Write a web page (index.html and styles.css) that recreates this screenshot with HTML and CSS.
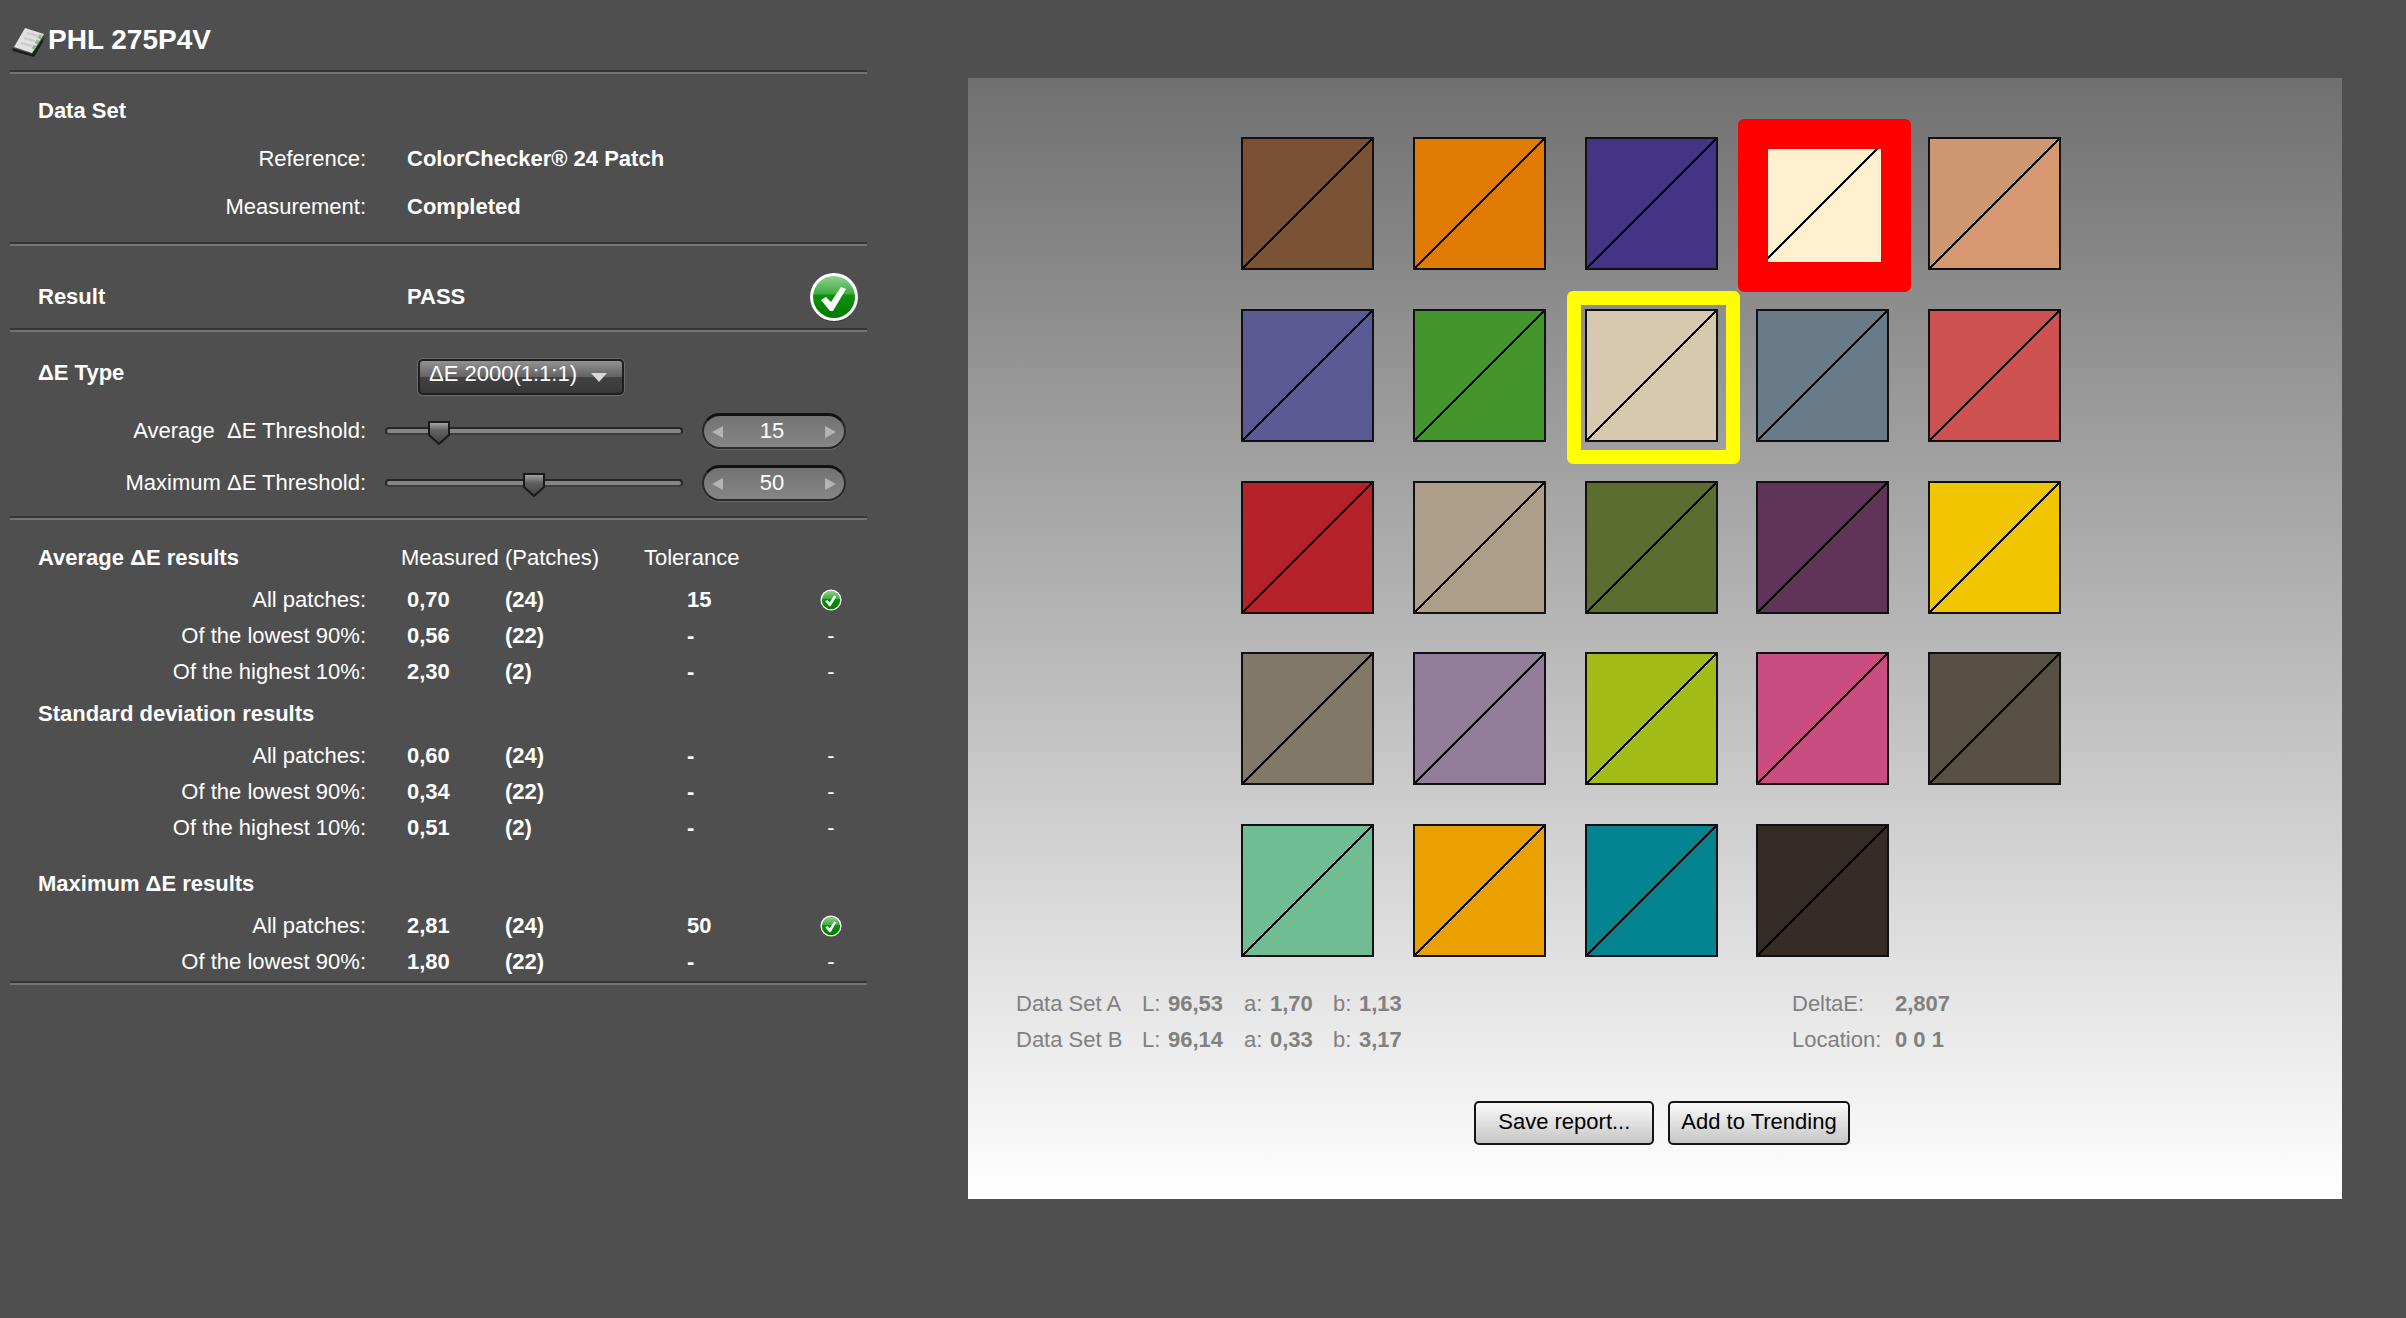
FILE: index.html
```
<!DOCTYPE html>
<html lang="en">
<head>
    <meta charset="UTF-8">
    <meta name="viewport" content="width=device-width, initial-scale=1.0">
    <title>PHL 275P4V</title>
    <link rel="stylesheet" href="styles.css">
</head>
<body>
    <!-- shared pass icon -->
    <svg class="defs" width="0" height="0" aria-hidden="true">
        <defs>
            <linearGradient id="green" x1="0" y1="0" x2="0" y2="1">
                <stop offset="0" stop-color="#8fcf8f"/>
                <stop offset="0.42" stop-color="#3fae3f"/>
                <stop offset="0.46" stop-color="#0c920c"/>
                <stop offset="1" stop-color="#007a00"/>
            </linearGradient>
            <symbol id="pass" viewBox="0 0 50 50">
                <circle cx="25" cy="26" r="24" fill="#000" opacity="0.25"/>
                <circle cx="25" cy="25" r="24" fill="#fff"/>
                <circle cx="25" cy="25" r="21" fill="url(#green)"/>
                <path d="M12 28l5-3 5 5 10-15 5 2-13 22h-3z" fill="#fff"/>
            </symbol>
        </defs>
    </svg>

    <main class="layout">
        <div class="report">
            <header class="title">
                <svg class="title-icon" viewBox="0 0 34 34" aria-hidden="true">
                    <path d="M0 23L20 29 32 12 31 17 22 32 1 26z" fill="#1c1c1c"/>
                    <path d="M13 3L32 9 20 28 2 22z" fill="#e0e0e0"/>
                    <path d="M15 8l11 3M12 13l11 3M9 18l11 3" stroke="#cacaca" stroke-width="2"/>
                    <path d="M29 10l-8 14" stroke="#86bd86" stroke-width="3" stroke-dasharray="4 2"/>
                </svg>
                <h1>PHL 275P4V</h1>
            </header>
            <hr>

            <section class="dataset">
                <h2>Data Set</h2>
                <dl>
                    <dt>Reference:</dt>
                    <dd>ColorChecker® 24 Patch</dd>
                    <dt>Measurement:</dt>
                    <dd>Completed</dd>
                </dl>
            </section>
            <hr>

            <section class="result">
                <h2>Result</h2>
                <strong>PASS</strong>
                <svg class="pass-large" role="img" aria-label="Pass"><use href="#pass"/></svg>
            </section>
            <hr>

            <section class="thresholds">
                <div class="type-row">
                    <label for="type">ΔE Type</label>
                    <div class="select-box">
                        <select id="type">
                            <option>ΔE 2000(1:1:1)</option>
                            <option>ΔE 1994</option>
                            <option>ΔE 1976</option>
                        </select>
                        <svg class="select-arrow" viewBox="0 0 16 9" aria-hidden="true"><path d="M0 0h16L8 9z" fill="#d8d8d8"/></svg>
                    </div>
                </div>
                <div class="slider-row">
                    <label for="avg">Average&nbsp; ΔE Threshold:</label>
                    <input class="slider" id="avg" type="range" min="0" max="100" value="15">
                    <div class="spinner">
                        <button type="button" aria-label="Decrease average threshold"><svg viewBox="0 0 11 12"><path d="M11 0v12L0 6z"/></svg></button>
                        <input type="text" value="15" aria-label="Average ΔE threshold value">
                        <button type="button" aria-label="Increase average threshold"><svg viewBox="0 0 11 12"><path d="M0 0v12l11-6z"/></svg></button>
                    </div>
                </div>
                <div class="slider-row">
                    <label for="max">Maximum ΔE Threshold:</label>
                    <input class="slider" id="max" type="range" min="0" max="100" value="50">
                    <div class="spinner">
                        <button type="button" aria-label="Decrease maximum threshold"><svg viewBox="0 0 11 12"><path d="M11 0v12L0 6z"/></svg></button>
                        <input type="text" value="50" aria-label="Maximum ΔE threshold value">
                        <button type="button" aria-label="Increase maximum threshold"><svg viewBox="0 0 11 12"><path d="M0 0v12l11-6z"/></svg></button>
                    </div>
                </div>
            </section>
            <hr>

            <table class="results">
                <colgroup>
                    <col class="col-label"><col class="col-value"><col class="col-count"><col class="col-tolerance"><col>
                </colgroup>
                <tbody>
                    <tr class="group">
                        <th>Average ΔE results</th>
                        <th class="plain" colspan="2">Measured (Patches)</th>
                        <th class="plain">Tolerance</th>
                        <td></td>
                    </tr>
                    <tr><th>All patches:</th><td>0,70</td><td>(24)</td><td>15</td><td><svg class="pass-small" role="img" aria-label="Pass"><use href="#pass"/></svg></td></tr>
                    <tr><th>Of the lowest 90%:</th><td>0,56</td><td>(22)</td><td>-</td><td>-</td></tr>
                    <tr><th>Of the highest 10%:</th><td>2,30</td><td>(2)</td><td>-</td><td>-</td></tr>
                </tbody>
                <tbody class="deviation">
                    <tr class="group"><th colspan="5">Standard deviation results</th></tr>
                    <tr><th>All patches:</th><td>0,60</td><td>(24)</td><td>-</td><td>-</td></tr>
                    <tr><th>Of the lowest 90%:</th><td>0,34</td><td>(22)</td><td>-</td><td>-</td></tr>
                    <tr><th>Of the highest 10%:</th><td>0,51</td><td>(2)</td><td>-</td><td>-</td></tr>
                </tbody>
                <tbody class="maximum">
                    <tr class="group"><th colspan="5">Maximum ΔE results</th></tr>
                    <tr><th>All patches:</th><td>2,81</td><td>(24)</td><td>50</td><td><svg class="pass-small" role="img" aria-label="Pass"><use href="#pass"/></svg></td></tr>
                    <tr><th>Of the lowest 90%:</th><td>1,80</td><td>(22)</td><td>-</td><td>-</td></tr>
                </tbody>
            </table>
            <hr>
        </div>

        <div class="viewer">
            <div class="patches">
                <div class="patch" style="--a:#7a5035;--b:#7a5334"></div>
                <div class="patch" style="--a:#e07c04;--b:#e07c04"></div>
                <div class="patch" style="--a:#433484;--b:#433484"></div>
                <div class="patch worst" style="--a:#fff0d0;--b:#fff0d0"></div>
                <div class="patch" style="--a:#cd9870;--b:#d69870"></div>

                <div class="patch" style="--a:#5b5b94;--b:#5a5993"></div>
                <div class="patch" style="--a:#45952d;--b:#45952d"></div>
                <div class="patch selected" style="--a:#d7c9af;--b:#d7c9af"></div>
                <div class="patch" style="--a:#697a88;--b:#697a88"></div>
                <div class="patch" style="--a:#ce5152;--b:#ce5152"></div>

                <div class="patch" style="--a:#b7212a;--b:#b7212a"></div>
                <div class="patch" style="--a:#ad9f8a;--b:#ad9f8a"></div>
                <div class="patch" style="--a:#5d6d30;--b:#5d6d30"></div>
                <div class="patch" style="--a:#603359;--b:#603359"></div>
                <div class="patch" style="--a:#f1c500;--b:#f1c500"></div>

                <div class="patch" style="--a:#82786a;--b:#82786a"></div>
                <div class="patch" style="--a:#927d9a;--b:#927d9a"></div>
                <div class="patch" style="--a:#a2bb17;--b:#a2bb17"></div>
                <div class="patch" style="--a:#ca4d80;--b:#ca4d80"></div>
                <div class="patch" style="--a:#565143;--b:#565143"></div>

                <div class="patch" style="--a:#70bd95;--b:#70bd95"></div>
                <div class="patch" style="--a:#eaa000;--b:#eaa000"></div>
                <div class="patch" style="--a:#048391;--b:#048391"></div>
                <div class="patch" style="--a:#332c25;--b:#352c25"></div>
            </div>

            <table class="info">
                <colgroup>
                    <col class="w-name"><col class="w-key"><col class="w-l"><col class="w-key"><col class="w-a"><col class="w-key"><col><col class="w-delta"><col class="w-last">
                </colgroup>
                <tr><th>Data Set A</th><th>L:</th><td>96,53</td><th>a:</th><td>1,70</td><th>b:</th><td>1,13</td><th>DeltaE:</th><td>2,807</td></tr>
                <tr><th>Data Set B</th><th>L:</th><td>96,14</td><th>a:</th><td>0,33</td><th>b:</th><td>3,17</td><th>Location:</th><td>0 0 1</td></tr>
            </table>

            <div class="actions">
                <button type="button">Save report...</button>
                <button type="button">Add to Trending</button>
            </div>
        </div>
    </main>
</body>
</html>
```

FILE: styles.css
```
*, *::after {
    box-sizing: border-box;
}
body {
    margin: 0;
    background-color: #4f4f4f;
    color: white;
    font-family: "Liberation Sans", Arial, sans-serif;
    font-size: 22px;
    line-height: 36px;
}
h1, h2, dl, dd {
    margin: 0;
}
h1 {
    font-size: 28px;
}
h2 {
    font-size: 22px;
}
input, select, button {
    font: inherit;
    color: inherit;
}
.defs {
    position: absolute;
}
.layout {
    display: flex;
    align-items: flex-start;
    gap: 101px;
    padding: 0 64px 0 10px;
}

/* left column */
.report {
    flex: 0 0 857px;
}
.report hr {
    height: 4px;
    margin: 0;
    border: 0;
    border-top: 2px solid #353535;
    border-bottom: 2px solid #747474;
}
.title {
    display: flex;
    align-items: center;
    gap: 2px;
    height: 70px;
    padding: 13px 0 0 2px;
}
.title h1 {
    padding-bottom: 3px;
}
.title-icon {
    width: 34px;
    height: 34px;
}
.dataset {
    padding: 13px 0 11px;
    line-height: 48px;
}
.dataset h2, .result h2 {
    padding-left: 28px;
}
.dataset dl {
    display: grid;
    grid-template-columns: 356px 1fr;
    column-gap: 41px;
}
.dataset dt {
    text-align: right;
}
.dataset dd {
    font-weight: bold;
}
.result {
    display: grid;
    grid-template-columns: 356px 1fr 50px;
    column-gap: 41px;
    align-items: center;
    padding: 26px 8px 6px 0;
}
.pass-large {
    width: 50px;
    height: 50px;
}
.thresholds {
    padding: 21px 0 7px;
}
.type-row {
    display: flex;
    align-items: center;
    height: 48px;
    margin-bottom: 4px;
}
.type-row label {
    width: 408px;
    padding: 0 0 8px 28px;
    font-weight: bold;
}
.select-box {
    position: relative;
    width: 206px;
    height: 36px;
}
.select-box select {
    display: block;
    width: 100%;
    height: 36px;
    padding: 0 28px 7px 9px;
    border: 2px solid #1e1e1e;
    border-radius: 5px;
    background: linear-gradient(#929292, #626262 50%, #424242 50%, #383838);
    box-shadow: 0 0 0 1px #6c6c6c;
    line-height: 25px;
    appearance: none;
}
.select-arrow {
    position: absolute;
    right: 17px;
    top: 14px;
    width: 16px;
    height: 9px;
    pointer-events: none;
}
.slider-row {
    display: grid;
    grid-template-columns: 356px 298px 144px;
    column-gap: 19px;
    align-items: center;
    height: 52px;
}
.slider-row label {
    text-align: right;
}
.slider {
    width: 100%;
    height: 24px;
    margin: 0;
    background: none;
    appearance: none;
}
.slider::-webkit-slider-runnable-track {
    height: 8px;
    border: 2px solid #262626;
    border-bottom-color: #3c3c3c;
    border-radius: 4px;
    background-color: #858585;
}
.slider::-webkit-slider-thumb {
    width: 22px;
    height: 24px;
    margin-top: -8px;
    background: url("data:image/svg+xml,%3Csvg xmlns='http://www.w3.org/2000/svg' viewBox='0 0 22 24'%3E%3ClinearGradient id='g' x2='0' y2='1'%3E%3Cstop stop-color='%23aaa'/%3E%3Cstop offset='.4' stop-color='%23606060'/%3E%3Cstop offset='1' stop-color='%23424242'/%3E%3C/linearGradient%3E%3Cpath d='M1 1h20v13l-10 9-10-9z' fill='url(%23g)' stroke='%231a1a1a' stroke-width='2'/%3E%3C/svg%3E");
    appearance: none;
}
.spinner {
    display: flex;
    align-items: center;
    width: 144px;
    height: 36px;
    padding: 0 8px;
    border: 2px solid #2a2a2a;
    border-top: 3px solid #111;
    border-radius: 18px;
    background: linear-gradient(#727272, #868686);
    box-shadow: 0 1px 0 #666;
}
.spinner input {
    flex: 1;
    min-width: 0;
    height: 28px;
    padding: 0 4px 2px 0;
    border: 0;
    background: none;
    text-align: center;
}
.spinner button {
    display: flex;
    padding: 0;
    border: 0;
    background: none;
}
.spinner svg {
    width: 11px;
    height: 12px;
    fill: #b4b4b4;
}
.results {
    width: 100%;
    margin: 20px 0 1px;
    border-collapse: collapse;
    table-layout: fixed;
}
.col-label {
    width: 391px;
}
.col-value {
    width: 104px;
}
.col-count {
    width: 139px;
}
.col-tolerance {
    width: 151px;
}
.results th, .results td {
    height: 36px;
    padding: 0;
    text-align: left;
}
.results th {
    padding-right: 35px;
    font-weight: normal;
    text-align: right;
}
.results td {
    font-weight: bold;
}
.results td:nth-child(2) {
    padding-left: 6px;
}
.results td:nth-child(4) {
    padding-left: 43px;
}
.results td:nth-child(5) {
    font-weight: normal;
    text-align: center;
}
.results .group th {
    padding: 0 0 6px 28px;
    font-weight: bold;
    text-align: left;
}
.results .group .plain {
    padding-left: 0;
    font-weight: normal;
}
.results .deviation .group th {
    padding-top: 6px;
}
.results .maximum .group th {
    padding-top: 20px;
}
.pass-small {
    display: block;
    width: 22px;
    height: 22px;
    margin: 0 auto;
}

/* right column */
.viewer {
    flex: 1;
    margin-top: 78px;
    padding: 59px 48px 54px;
    background: linear-gradient(#707070, #fff);
    color: #808080;
}
.patches {
    display: grid;
    grid-template-columns: repeat(5, 133px);
    grid-auto-rows: 133px;
    justify-content: space-between;
    align-content: space-between;
    width: 828px;
    height: 820px;
    margin: 0 auto 29px;
    padding-right: 8px;
}
.patch {
    position: relative;
    border: 2px solid #111;
    background: linear-gradient(to bottom right, var(--a) calc(50% - 1px), #000 calc(50% - 1px), #000 calc(50% + 1px), var(--b) calc(50% + 1px));
}
/* coloured frame lies over the neighbouring patches */
.worst::after, .selected::after {
    content: "";
    position: absolute;
    z-index: 1;
    top: -20px;
    left: -20px;
    width: 173px;
    height: 173px;
    border: 30px solid red;
    border-radius: 6px;
}
.selected::after {
    border: 14px solid yellow;
}
.info {
    width: 100%;
    border-collapse: collapse;
    table-layout: fixed;
}
.info th, .info td {
    padding: 0;
    text-align: left;
    white-space: nowrap;
}
.info th {
    font-weight: normal;
}
.info td {
    font-weight: bold;
}
.w-name {
    width: 126px;
}
.w-key {
    width: 26px;
}
.w-l {
    width: 76px;
}
.w-a {
    width: 63px;
}
.w-delta {
    width: 103px;
}
.w-last {
    width: 399px;
}
.actions {
    display: flex;
    justify-content: center;
    gap: 14px;
    margin-top: 43px;
    padding-left: 14px;
}
.actions button {
    min-width: 180px;
    height: 44px;
    padding: 0 11px 3px;
    border: 2px solid #151515;
    border-radius: 5px;
    background: linear-gradient(#fafafa, #c6c6c6);
    color: black;
}
```
